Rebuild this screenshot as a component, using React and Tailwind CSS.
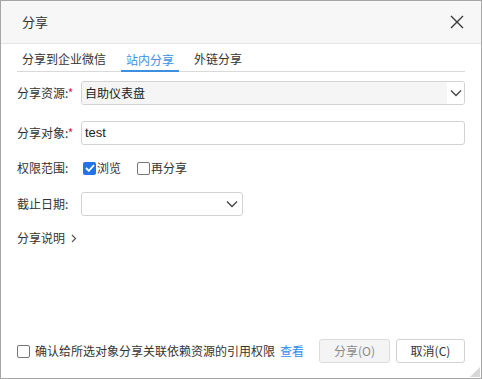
import React from "react";

const font = { fontFamily: '"Noto Sans CJK SC", "Noto Sans", sans-serif' };

function Chevron({ className = "" }) {
  return (
    <svg className={className} width="12" height="8" viewBox="0 0 12 8" fill="none">
      <path d="M1 1.5 L6 6.5 L11 1.5" stroke="#444" strokeWidth="1.3" />
    </svg>
  );
}

function Label({ text, required }) {
  return (
    <div className="w-[64px] shrink-0 text-[12px] text-[#333] leading-[18px]">
      {text}
      {required && <span className="text-[#e0245e]">*</span>}
    </div>
  );
}

export default function App() {
  return (
    <div
      className="w-[482px] h-[379px] bg-white border border-[#a6a6a6] flex flex-col text-[#333] overflow-hidden relative"
      style={font}
    >
      {/* header */}
      <div className="h-[43px] shrink-0 bg-[#f7f7f7] border-b border-[#e6e6e6] flex items-center justify-between pl-[21px] pr-[16px]">
        <span className="text-[13px] text-[#333]">分享</span>
        <svg width="14" height="14" viewBox="0 0 14 14" fill="none" className="mr-[1px]">
          <path d="M1 1 L13 13 M13 1 L1 13" stroke="#3a3a3a" strokeWidth="1.4" />
        </svg>
      </div>

      <div className="flex-1 flex flex-col px-[16px]">
        {/* tabs */}
        <div className="flex gap-[10px] border-b border-[#d9d9d9] h-[28px] items-end">
          <div className="px-[5px] pb-[3px] text-[12px] leading-[18px] text-[#333]">分享到企业微信</div>
          <div className="px-[5px] pb-[1px] text-[12px] leading-[18px] text-[#3d8fe0] border-b-2 border-[#3d8fe0] -mb-px">站内分享</div>
          <div className="px-[5px] pb-[3px] text-[12px] leading-[18px] text-[#333]">外链分享</div>
        </div>

        {/* row 1 */}
        <div className="flex items-center mt-[9px] h-[24px]">
          <Label text="分享资源:" required />
          <div className="flex-1 h-[24px] border border-[#d2d2d2] rounded-[3px] flex items-stretch overflow-hidden">
            <div className="flex-1 bg-[#f5f5f5] pl-[3px] flex items-center text-[12px] text-[#222]">自助仪表盘</div>
            <div className="w-[17px] bg-white flex items-center justify-center">
              <Chevron />
            </div>
          </div>
        </div>

        {/* row 2 */}
        <div className="flex items-center mt-[16px] h-[24px]">
          <Label text="分享对象:" required />
          <div className="flex-1 h-[24px] border border-[#d2d2d2] rounded-[3px] bg-white pl-[3px] flex items-center text-[13px] text-[#222]" style={{ fontFamily: '"Liberation Sans", "Noto Sans CJK SC", sans-serif' }}>
            test
          </div>
        </div>

        {/* row 3 */}
        <div className="flex items-center mt-[11px] h-[24px]">
          <Label text="权限范围:" />
          <div className="flex items-center ml-[2px]">
            <span className="w-[13px] h-[13px] rounded-[2px] bg-[#1f74e8] flex items-center justify-center">
              <svg width="10" height="8" viewBox="0 0 10 8" fill="none">
                <path d="M1 4 L3.8 6.8 L9 1.2" stroke="#fff" strokeWidth="1.8" />
              </svg>
            </span>
            <span className="ml-[1px] text-[12px] text-[#333]">浏览</span>
            <span className="ml-[16px] w-[13px] h-[13px] rounded-[2px] border border-[#767676] bg-white" />
            <span className="ml-[1px] text-[12px] text-[#333]">再分享</span>
          </div>
        </div>

        {/* row 4 */}
        <div className="flex items-center mt-[12px] h-[24px]">
          <Label text="截止日期:" />
          <div className="w-[162px] h-[24px] border border-[#d2d2d2] rounded-[3px] bg-white flex items-center justify-end pr-[4px]">
            <Chevron />
          </div>
        </div>

        {/* row 5 */}
        <div className="flex items-center mt-[12px] h-[20px] text-[12px] text-[#333]">
          <span>分享说明</span>
          <svg width="6" height="9" viewBox="0 0 6 9" fill="none" className="ml-[6px]">
            <path d="M1 1 L4.5 4.5 L1 8" stroke="#555" strokeWidth="1.2" />
          </svg>
        </div>

        <div className="flex-1" />

        {/* footer */}
        <div className="flex items-center h-[24px] mb-[15px]">
          <span className="w-[13px] h-[13px] rounded-[2px] border border-[#767676] bg-white shrink-0" />
          <span className="ml-[5px] text-[12px] text-[#333]">确认给所选对象分享关联依赖资源的引用权限</span>
          <span className="ml-[5px] text-[12px] text-[#2d8ce8]">查看</span>
          <div className="flex-1" />
          <div className="w-[71px] h-[24px] border border-[#dcdcdc] rounded-[3px] bg-[#f4f4f4] flex items-center justify-center text-[12px] text-[#8a8a8a]">
            分享(O)
          </div>
          <div className="ml-[6px] w-[69px] h-[24px] border border-[#d2d2d2] rounded-[3px] bg-white flex items-center justify-center text-[12px] text-[#333]">
            取消(C)
          </div>
        </div>
      </div>

      {/* resize grip */}
      <svg className="absolute right-[1px] bottom-[1px]" width="10" height="10" viewBox="0 0 10 10">
        <path d="M10 0 L10 10 L0 10 Z" fill="#d8d8d8" />
      </svg>
    </div>
  );
}
